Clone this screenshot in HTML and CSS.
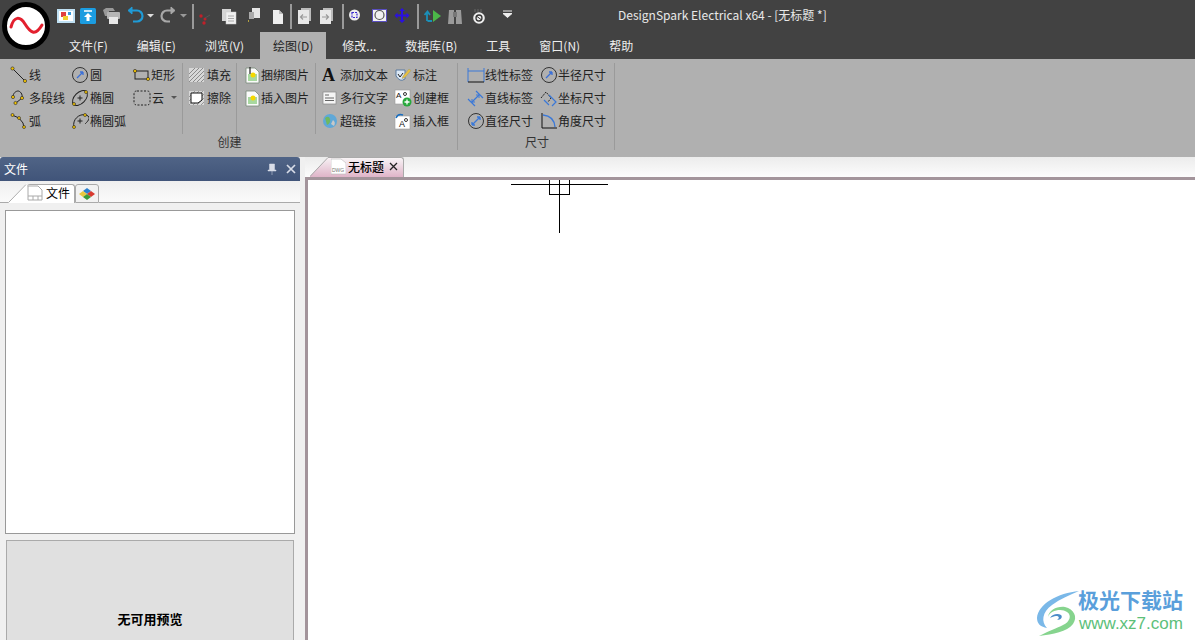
FILE: index.html
```html
<!DOCTYPE html>
<html lang="zh">
<head>
<meta charset="utf-8">
<title>DesignSpark Electrical</title>
<link rel="stylesheet" href="styles.css">
</head>
<body>
<div class="app">
  <header class="top">
    <svg class="logo" width="48" height="48" viewBox="0 0 48 48"><circle cx="24" cy="24" r="21.5" fill="#fff" stroke="#000" stroke-width="5"/><path d="M9 25C12 14 18 14 23 22S33 35 40 23" fill="none" stroke="#e3202e" stroke-width="3" stroke-linecap="round"/></svg>
    <div class="titlerow">
      <div class="qa">
        <svg width="23" height="20" viewBox="0 0 23 20"><rect x="0" y="3" width="18" height="14" fill="#bfe0f3"/><rect x="2" y="5" width="14" height="10" fill="#fff"/><rect x="4" y="6" width="5" height="5" fill="#e04040"/><rect x="6" y="10" width="5" height="4" fill="#f0d030"/><rect x="11" y="6" width="3" height="3" fill="#3a9ad9"/></svg>
        <svg width="23" height="20" viewBox="0 0 23 20"><rect x="0" y="2" width="16" height="16" rx="1.5" fill="#1b9ce0"/><path d="M4 5h8" stroke="#fff" stroke-width="1.5"/><path d="M8 7l4 4H9.500v4h-3v-4H4z" fill="#fff"/></svg>
        <svg width="24" height="20" viewBox="0 0 24 20"><path d="M0 4l3-2h7l2 3H6v5H2z" fill="#999"/><rect x="4" y="6" width="13" height="7" rx="1" fill="#b5b5b5"/><rect x="6" y="11" width="9" height="7" fill="#e8e8e8"/></svg>
        <svg width="19" height="20" viewBox="0 0 19 20"><path d="M4 4.500h6a5.500 5.500 0 0 1 0 11H6" fill="none" stroke="#1f9bd7" stroke-width="2.200"/><path d="M5 1v7L1 4.500z" fill="#1f9bd7" stroke="#1f9bd7"/></svg>
        <svg width="14" height="20" viewBox="0 0 14 20"><path d="M1 8h7l-3.500 3.500z" fill="#ddd"/></svg>
        <svg width="20" height="20" viewBox="0 0 20 20"><path d="M11 4.500H7a5.500 5.500 0 0 0 0 11h3" fill="none" stroke="#a8a8a8" stroke-width="2.200"/><path d="M11 1v7l4-3.500z" fill="#a8a8a8" stroke="#a8a8a8"/></svg>
        <svg width="12" height="20" viewBox="0 0 12 20"><path d="M0 8h7l-3.500 3.500z" fill="#999"/></svg>
        <span class="qasep"></span>
        <svg width="24" height="20" viewBox="0 0 24 20"><circle cx="3" cy="10" r="1.700" fill="#c0202a"/><circle cx="7" cy="13" r="1.500" fill="#c0202a"/><circle cx="6" cy="17" r="1.700" fill="#c0202a"/><path d="M7 12l5-3" stroke="#555"/></svg>
        <svg width="26" height="20" viewBox="0 0 26 20"><rect x="0" y="3" width="9" height="12" fill="#d5d5d5"/><rect x="4" y="6" width="10" height="12" fill="#f0f0f0" stroke="#ccc" stroke-width=".5"/><path d="M6 10h6M6 12.500h6M6 15h6" stroke="#aaa"/></svg>
        <svg width="24" height="20" viewBox="0 0 24 20"><rect x="4" y="2" width="8" height="10" fill="#e5e5e5"/><rect x="1" y="6" width="5" height="7" fill="#aaa"/><circle cx="0" cy="15" r="1" fill="#d8c040"/></svg>
        <svg width="18" height="20" viewBox="0 0 18 20"><path d="M1 4h6l4 4v10H1z" fill="#eee"/><path d="M7 4v4h4" fill="#bbb"/></svg>
        <span class="qasep qasep-tight"></span>
        <svg width="22" height="20" viewBox="0 0 22 20"><rect x="3" y="2" width="10" height="13" fill="#bbb"/><rect x="0" y="4" width="11" height="14" fill="#e8e8e8"/><path d="M9 11H3M5 8.500L2.500 11 5 13.500" fill="none" stroke="#999" stroke-width="1.200"/></svg>
        <svg width="22" height="20" viewBox="0 0 22 20"><rect x="3" y="2" width="10" height="13" fill="#bbb"/><rect x="0" y="4" width="11" height="14" fill="#e8e8e8"/><path d="M2 11h6M6 8.500L8.500 11 6 13.500" fill="none" stroke="#999" stroke-width="1.200"/></svg>
        <span class="qasep qasep-wide"></span>
        <svg width="23" height="20" viewBox="0 0 23 20"><circle cx="5.500" cy="9" r="5.500" fill="#eee"/><rect x="3" y="6.500" width="5" height="5" fill="none" stroke="#3a2ad0" stroke-dasharray="2 1" stroke-width="1.200"/></svg>
        <svg width="22" height="20" viewBox="0 0 22 20"><rect x="0.500" y="3.500" width="14" height="12" fill="#f2f2f2" stroke="#5a4fc0"/><circle cx="7.500" cy="9" r="4.500" fill="none" stroke="#555" stroke-width="1.200"/></svg>
        <svg width="23" height="20" viewBox="0 0 23 20"><path d="M8 2l3 3H9v3.500h3.500v-2l3 3-3 3v-2H9V14h2l-3 3-3-3h2v-3.500H3.500v2l-3-3 3-3v2H7V5H5z" fill="#2a10e0"/></svg>
        <span class="qasep qasep-wide"></span>
        <svg width="24" height="20" viewBox="0 0 24 20"><path d="M3 16V8M0.500 10L3.500 6.500 6 10M3.500 16H8" transform="translate(0 -1)" fill="none" stroke="#1b8fb8" stroke-width="1.800"/><path d="M9 4l8 6-8 6z" fill="#4cb848"/></svg>
        <svg width="25" height="20" viewBox="0 0 25 20"><path d="M1 4h5v14H0zM8 4h5l1 14H8z" fill="#9a9a9a"/><rect x="5" y="6" width="4" height="5" fill="#777"/></svg>
        <svg width="29" height="20" viewBox="0 0 29 20"><circle cx="6" cy="12" r="5.800" fill="#eee"/><circle cx="6" cy="12" r="3" fill="none" stroke="#333" stroke-width="1.300"/><path d="M2 3v3M5 3v3M8 3v3" stroke="#666"/><path d="M4 10.500l4 3" stroke="#333"/></svg>
        <svg width="12" height="20" viewBox="0 0 12 20"><path d="M1 5h9M1 7.500h9l-4.500 4z" fill="#eee" stroke="#eee" stroke-width="1"/></svg>
      </div>
      <div class="apptitle">DesignSpark Electrical x64 - [无标题 *]</div>
    </div>
    <nav class="menu">
      <span class="mi">文件(F)</span>
      <span class="mi">编辑(E)</span>
      <span class="mi">浏览(V)</span>
      <span class="mi on">绘图(D)</span>
      <span class="mi">修改...</span>
      <span class="mi">数据库(B)</span>
      <span class="mi">工具</span>
      <span class="mi">窗口(N)</span>
      <span class="mi">帮助</span>
    </nav>
  </header>

  <section class="ribbon">
    <div class="group group-create">
      <div class="sections">
        <div class="sec sec-shapes">
          <span class="it"><svg width="18" height="18" viewBox="0 0 18 18"><path d="M2 2l13 13" stroke="#222"/><circle cx="2.500" cy="2.500" r="1.600" fill="#f3c300" stroke="#222" stroke-width=".6"/><circle cx="15" cy="15" r="1.600" fill="#f3c300" stroke="#222" stroke-width=".6"/></svg>线</span>
          <span class="it"><svg width="18" height="18" viewBox="0 0 18 18"><circle cx="9" cy="9" r="7.500" fill="none" stroke="#333"/><path d="M6 12l6-6M12 6H9M12 6v3" stroke="#3a6fd8" fill="none" stroke-width="1.300"/></svg>圆</span>
          <span class="it it-tight"><svg width="18" height="18" viewBox="0 0 18 18"><rect x="2" y="5" width="13" height="8" fill="none" stroke="#222"/><circle cx="2" cy="5" r="1.600" fill="#f3c300" stroke="#222" stroke-width=".6"/><circle cx="15" cy="13" r="1.600" fill="#f3c300" stroke="#222" stroke-width=".6"/></svg>矩形</span>
          <span class="it"><svg width="18" height="18" viewBox="0 0 18 18"><path d="M3 8C3 4 6 2 8 2s5 3 4 7l-6 5" fill="none" stroke="#222"/><circle cx="3" cy="8" r="1.600" fill="#f3c300" stroke="#222" stroke-width=".6"/><circle cx="12" cy="9" r="1.600" fill="#f3c300" stroke="#222" stroke-width=".6"/><circle cx="5.500" cy="14" r="1.600" fill="#f3c300" stroke="#222" stroke-width=".6"/></svg>多段线</span>
          <span class="it"><svg width="18" height="18" viewBox="0 0 18 18"><ellipse cx="9" cy="9" rx="9" ry="5.500" transform="rotate(-45 9 9)" fill="none" stroke="#222"/><path d="M6.500 9h5M9 6.500v5" stroke="#222"/><circle cx="3" cy="15" r="1.500" fill="#f3c300" stroke="#222" stroke-width=".6"/><circle cx="15" cy="3" r="1.500" fill="#f3c300" stroke="#222" stroke-width=".6"/></svg>椭圆</span>
          <span class="it"><svg width="18" height="18" viewBox="0 0 18 18" stroke-dasharray="2 1.500"><path d="M4 2h10q3 0 3 3v8q0 3-3 3H4q-3 0-3-3V5q0-3 3-3z" fill="none" stroke="#222"/></svg>云<i class="caret"></i></span>
          <span class="it"><svg width="18" height="18" viewBox="0 0 18 18"><path d="M2 3l7 3 4 5 1 5" fill="none" stroke="#222"/><circle cx="2.500" cy="3" r="1.500" fill="#f3c300" stroke="#222" stroke-width=".6"/><circle cx="9" cy="6" r="1.500" fill="#f3c300" stroke="#222" stroke-width=".6"/><circle cx="14" cy="15" r="1.500" fill="#f3c300" stroke="#222" stroke-width=".6"/></svg>弧</span>
          <span class="it"><svg width="18" height="18" viewBox="0 0 18 18"><path d="M3 15C1 8 8 1 15 3s0 8-1 9" fill="none" stroke="#222"/><path d="M6.500 9h5M9 6.500v5" stroke="#222"/><circle cx="3" cy="15" r="1.500" fill="#f3c300" stroke="#222" stroke-width=".6"/><circle cx="14" cy="3" r="1.500" fill="#f3c300" stroke="#222" stroke-width=".6"/></svg>椭圆弧</span>
        </div>
        <div class="sec sec-fill">
          <span class="it"><svg width="18" height="18" viewBox="0 0 18 18"><rect x="1" y="2" width="15" height="14" fill="#d8d8d8"/><path d="M1 8l6-6M1 12l10-10M1 16L15 2M5 16l11-11M9 16l7-7M13 16l3-3" stroke="#777" stroke-width=".8"/></svg>填充</span>
          <span class="it"><svg width="18" height="18" viewBox="0 0 18 18"><rect x="1" y="2" width="15" height="14" fill="#d8d8d8"/><path d="M1 8l6-6M1 12l10-10M1 16L15 2M5 16l11-11M9 16l7-7M13 16l3-3" stroke="#888" stroke-width=".8"/><path d="M3 4h11v7l-4 3H3z" fill="#fff" stroke="#111"/></svg>擦除</span>
        </div>
        <div class="sec sec-pic">
          <span class="it"><svg width="15" height="18" viewBox="0 0 15 18"><path d="M1 2h9l4 4v11H1z" fill="#fbfbfb" stroke="#7a8a7a" stroke-width=".8"/><rect x="3" y="8" width="9" height="7" fill="#a8d8a0"/><circle cx="8" cy="9" r="2.500" fill="#f5d800"/><path d="M5 1v7" stroke="#222" stroke-width="1.200"/></svg>捆绑图片</span>
          <span class="it"><svg width="15" height="18" viewBox="0 0 15 18"><path d="M1 2h9l4 4v11H1z" fill="#fbfbfb" stroke="#7a8a7a" stroke-width=".8"/><rect x="3" y="8" width="9" height="7" fill="#a8d8a0"/><circle cx="8" cy="9" r="2.500" fill="#f5d800"/></svg>插入图片</span>
        </div>
        <div class="sec sec-text">
          <span class="it"><svg width="16" height="18" viewBox="0 0 16 18"><text class="svga" x="0" y="15" font-size="18">A</text></svg>添加文本</span>
          <span class="it"><svg width="18" height="18" viewBox="0 0 18 18"><path d="M2 4h9v9q-3 2-5 1T2 10z" fill="#dce8f5" stroke="#5a7aa0"/><path d="M4 8l2 3 3-4" stroke="#222" fill="none"/><path d="M9 10l6-7 2 1.500-6 7-3 1z" fill="#e8c040" stroke="#997" stroke-width=".5"/></svg>标注</span>
          <span class="it"><svg width="16" height="18" viewBox="0 0 16 18"><rect x="1" y="3" width="13" height="12" fill="#f5f5f5" stroke="#888" stroke-width=".7"/><path d="M3 6h4M3 9h9M3 11.500h9" stroke="#666"/></svg>多行文字</span>
          <span class="it"><svg width="18" height="18" viewBox="0 0 18 18"><rect x="1" y="1" width="15" height="14" fill="#fff" stroke="#999" stroke-width=".6"/><text class="svgt" x="2" y="9" font-size="8">A</text><circle cx="11" cy="5" r="1.500" fill="none" stroke="#333"/><circle cx="13" cy="13" r="4.500" fill="#27a83c"/><path d="M10.500 13h5M13 10.500v5" stroke="#fff" stroke-width="1.300"/></svg>创建框</span>
          <span class="it"><svg width="16" height="18" viewBox="0 0 16 18"><circle cx="8" cy="9" r="7" fill="#5fa8d8"/><path d="M3 6q4-3 5 1t-3 6z" fill="#6fb860"/><path d="M11 8q3 2 1 6l-3-2z" fill="#c8c8c8"/></svg>超链接</span>
          <span class="it"><svg width="18" height="18" viewBox="0 0 18 18"><rect x="1" y="4" width="15" height="13" fill="#fff" stroke="#999" stroke-width=".6"/><text class="svgt" x="5" y="15" font-size="9">A</text><circle cx="12" cy="8" r="1.500" fill="none" stroke="#333"/><path d="M2 6q2-5 7-3" fill="none" stroke="#1b6fc0" stroke-width="1.500"/></svg>插入框</span>
        </div>
      </div>
      <div class="glabel">创建</div>
    </div>
    <div class="group group-dim">
      <div class="sections">
        <div class="sec sec-dim">
          <span class="it"><svg width="18" height="18" viewBox="0 0 18 18"><path d="M1 2v14M17 2v14M1 5h16" fill="none" stroke="#3a78d8"/><path d="M1 16h16" stroke="#111"/></svg>线性标签</span>
          <span class="it"><svg width="18" height="18" viewBox="0 0 18 18"><circle cx="9" cy="9" r="7.500" fill="none" stroke="#333"/><path d="M6 12l6-6M12 6H9M12 6v3" stroke="#3a6fd8" fill="none" stroke-width="1.300"/></svg>半径尺寸</span>
          <span class="it"><svg width="18" height="18" viewBox="0 0 18 18"><path d="M1 10l7 7M9 2l7 7M5 13l7-7" fill="none" stroke="#3a78d8" stroke-width="1.200"/><path d="M5 13h3M5 13v-3M12 6H9M12 6v3" fill="none" stroke="#3a78d8"/></svg>直线标签</span>
          <span class="it"><svg width="18" height="18" viewBox="0 0 18 18"><path d="M1 9l5-6 5 6-3 4" fill="none" stroke="#222" stroke-dasharray="2 1"/><path d="M9 6l7 7-4 4M4 11l5 5" fill="none" stroke="#3a78d8" stroke-width="1.200"/></svg>坐标尺寸</span>
          <span class="it"><svg width="18" height="18" viewBox="0 0 18 18"><circle cx="9" cy="9" r="7.500" fill="none" stroke="#333"/><path d="M5 13l8-8M13 5H10M13 5v3M5 13h3M5 13v-3" stroke="#3a78d8" fill="none" stroke-width="1.300"/></svg>直径尺寸</span>
          <span class="it"><svg width="18" height="18" viewBox="0 0 18 18"><path d="M2 1v15h15" fill="none" stroke="#111"/><path d="M3 3q11 1 12 12" fill="none" stroke="#3a78d8" stroke-width="1.300"/></svg>角度尺寸</span>
        </div>
      </div>
      <div class="glabel">尺寸</div>
    </div>
  </section>

  <main class="work">
    <aside class="panel">
      <div class="phead"><span>文件</span>
        <span class="pbtns">
          <svg width="10" height="12" viewBox="0 0 10 12"><path d="M2.500 1h5v6h1.500v1H1V7h1.500zM5 8v4" fill="#d8dde8" stroke="#d8dde8" stroke-width=".5"/></svg>
          <svg width="10" height="10" viewBox="0 0 10 10"><path d="M1 1l8 8M9 1l-8 8" stroke="#d8dde8" stroke-width="1.700"/></svg>
        </span>
      </div>
      <div class="ptabs">
        <svg class="slope" width="27" height="21" viewBox="0 0 27 21"><path d="M0 20h8L26 2l1-1v20H0z" fill="#fff"/><path d="M0 20.500h8.500L26 2.500" fill="none" stroke="#aaa"/></svg>
        <span class="ptab ptab-file"><svg width="16" height="16" viewBox="0 0 16 16"><path d="M1 1h10l4 4v10H1z" fill="#fff" stroke="#aaa"/><path d="M1 11h14M6 11v4M11 11v4" stroke="#aaa"/></svg>文件</span>
        <span class="ptab ptab-lib"><svg width="17" height="14" viewBox="0 0 17 14"><path d="M8 1l4 3-4 3-4-3z" fill="#2a80d0"/><path d="M12 4l4 3-4 3-4-3z" fill="#d83a30"/><path d="M4 4l4 3-4 3-4-3z" fill="#e8c840"/><path d="M8 7l4 3-4 3-4-3z" fill="#3a9a38"/></svg></span>
        <span class="ptabfill"></span>
      </div>
      <div class="pbody">
        <div class="list"></div>
        <div class="preview"><b>无可用预览</b></div>
      </div>
    </aside>
    <div class="split"></div>
    <section class="doc">
      <div class="dtabs">
        <svg class="slope" width="21" height="21" viewBox="0 0 21 21"><defs><linearGradient id="pink" x1="0" y1="0" x2="0" y2="1"><stop offset="0" stop-color="#f8f4f6"/><stop offset="1" stop-color="#dfb4c8"/></linearGradient></defs><path d="M0 20L18 1h3v20H0z" fill="url(#pink)"/><path d="M0 20.500L18 1.500h3" fill="none" stroke="#aaa"/></svg>
        <span class="dtab"><svg width="15" height="17" viewBox="0 0 15 17"><path d="M0 1h10l5 4v11H0z" fill="#fff" stroke="#bbb" stroke-width=".6"/><text class="svgt dwg" x="1" y="14" font-size="5">DWG</text></svg><b>无标题</b><svg class="dx" width="9" height="9" viewBox="0 0 9 9"><path d="M1 1l7 7M8 1L1 8" stroke="#222" stroke-width="1.300"/></svg></span>
        <span class="dtabfill"></span>
      </div>
      <div class="frame">
        <div class="canvas">
          <span class="cross-h"></span>
          <span class="cross-v"></span>
          <span class="cross-box"></span>
        </div>
      </div>
    </section>
  </main>

  <div class="wm">
    <svg class="wmicon" width="44" height="48" viewBox="0 0 44 48"><path d="M43 1C22 3 2 14 1 28c0 6 4 9 10 10C5 32 6 22 16 15 24 9 34 5 43 1z" fill="#7ab8e8"/><path d="M12 27c2-7 14-9 19-5 5 3 3 10-4 13-6 3-14 6-24 11 14-2 28-4 34-12 5-7 1-15-8-17-8-1-16 3-17 10z" fill="#86d48e"/><path d="M14 28c2-4 8-5 11-3 2 2 0 5-4 5 3-2 2-4-1-4-2 0-4 1-6 2z" fill="#4c8cc8"/></svg>
    <div class="wmtext"><strong>极光下载站</strong><em>www.xz7.com</em></div>
  </div>
</div>
</body>
</html>
```
FILE: styles.css
```css
* { box-sizing: border-box; }
html, body { margin: 0; padding: 0; background: #fff; }
body { font: 12px/16px "Noto Sans CJK SC", "Liberation Sans", sans-serif; color: #222; }
.app { position: relative; width: 1195px; height: 640px; overflow: hidden; display: flex; flex-direction: column; }
svg { display: block; flex: none; }

.top { position: relative; height: 59px; background: #424242; color: #eee; flex: none; }
.logo { position: absolute; left: 2px; top: 2px; }
.titlerow { height: 32px; display: flex; align-items: center; padding-left: 57px; }
.qa { display: flex; align-items: center; width: 456px; flex: none; }
.qasep { width: 2px; height: 25px; background: #9a9a9a; margin-right: 4px; flex: none; }
.qasep-tight { margin-right: 6px; }
.qasep-wide { margin-right: 5px; }
.apptitle { margin: 0 0 3px 105px; white-space: nowrap; color: #e8e8e8; font-size: 12px; }
.menu { height: 27px; display: flex; gap: 3px; padding-left: 56px; align-items: stretch; }
.mi { padding: 6px 13px 0; white-space: nowrap; }
.mi.on { background: #b0b0b0; color: #222; }

.ribbon { height: 98px; background: #b0b0b0; display: flex; flex: none; padding-top: 4px; }
.group { display: flex; flex-direction: column; border-right: 1px solid #9a9a9a; margin-bottom: 7px; }
.group-create { width: 458px; }
.group-dim { width: 157px; }
.sections { display: flex; height: 71px; }
.sec { display: grid; grid-auto-rows: 23px; height: 71px; border-right: 1px solid #9a9a9a; align-content: start; }
.sec:last-child { border-right: 0; }
.sec-shapes { width: 183px; padding-left: 10px; grid-template-columns: 61px 62px 49px; }
.sec-fill { width: 54px; padding-left: 5px; }
.sec-pic { width: 79px; padding-left: 8px; }
.sec-text { flex: 1; padding-left: 6px; grid-template-columns: 72px 62px; }
.sec-dim { flex: 1; padding-left: 9px; grid-template-columns: 73px 73px; }
.it { display: flex; align-items: center; gap: 1px; white-space: nowrap; color: #222; }
.it-tight, .sec-dim .it { gap: 0; }
.sec-pic .it { gap: 1px; }
.sec-text .it:nth-child(odd) { gap: 2px; }
.caret { width: 0; height: 0; margin-left: 6px; border: 3px solid transparent; border-top: 3px solid #555; border-bottom: 0; }
.glabel { text-align: center; color: #333; line-height: 16px; padding-left: 2px; }
.svgt { font-family: "Liberation Sans", sans-serif; fill: #111; }
.svga { font-family: "Liberation Serif", serif; font-weight: 700; fill: #111; }
.dwg { fill: #777; }

.work { flex: 1; display: flex; min-height: 0; background: #f0f0f0; }
.panel { width: 300px; display: flex; flex-direction: column; flex: none; }
.phead { height: 24px; background: linear-gradient(#506486, #405479); color: #fff; border-radius: 3px 3px 0 0; display: flex; align-items: center; justify-content: space-between; padding: 0 4px; }
.pbtns { display: flex; gap: 9px; align-items: center; }
.ptabs { height: 22px; display: flex; align-items: flex-end; background: linear-gradient(#efefef, #fbfbfb); }
.slope { align-self: flex-end; }
.ptab { height: 19px; background: #fff; border: 1px solid #aaa; border-bottom: 0; border-radius: 3px 3px 0 0; display: flex; align-items: center; }
.ptab-file { width: 48px; gap: 3px; color: #000; border-left: 0; padding-bottom: 3px; }
.ptab-lib { width: 24px; padding-left: 3px; background: #f2f2f2; border-bottom: 1px solid #aaa; }
.ptabfill { flex: 1; height: 1px; background: #aaa; }
.pbody { flex: 1; display: flex; flex-direction: column; padding: 7px 5px 0; background: #f0f0f0; }
.list { height: 324px; background: #fff; border: 1px solid #999; }
.preview { margin: 6px 1px 0; flex: 1; background: #e0e0e0; border: 1px solid #aaa; border-bottom: 0; text-align: center; padding-top: 70px; color: #000; font-size: 13px; }
.split { width: 5px; flex: none; background: #f0f0f0; }

.doc { flex: 1; display: flex; flex-direction: column; min-width: 0; }
.dtabs { height: 20px; display: flex; align-items: flex-end; padding-left: 5px; background: linear-gradient(#ececec, #fcfcfc); }
.dtab { width: 73px; height: 20px; display: flex; align-items: center; padding-bottom: 2px; background: linear-gradient(#f8f4f6, #dfb4c8); border: 1px solid #aaa; border-left: 0; border-bottom: 0; border-radius: 0 3px 0 0; color: #000; }
.dtab b { margin-left: 2px; font-weight: 500; }
.dx { margin-left: 5px; }
.dtabfill { flex: 1; }
.frame { flex: 1; display: flex; border: 3px solid #a3949b; border-width: 3px 0 0 3px; background: #fff; }
.canvas { position: relative; flex: 1; background: #fff; }
.cross-h { position: absolute; left: 203px; top: 4px; width: 97px; height: 1px; background: #000; }
.cross-v { position: absolute; left: 251px; top: 0; width: 1px; height: 53px; background: #000; }
.cross-box { position: absolute; left: 241px; top: 0; width: 21px; height: 15px; border: 1px solid #000; border-top: 0; }

.wm { position: absolute; left: 1036px; top: 588px; display: flex; }
.wmicon { margin-top: 2px; }
.wmtext { display: flex; flex-direction: column; margin-left: -2px; }
.wmtext strong { font-size: 21px; line-height: 23px; color: #5a9fdb; font-weight: 700; white-space: nowrap; }
.wmtext em { font: 17px/20px "Liberation Sans", sans-serif; color: #5cc07a; margin-top: 3px; margin-left: 1px; }
```
